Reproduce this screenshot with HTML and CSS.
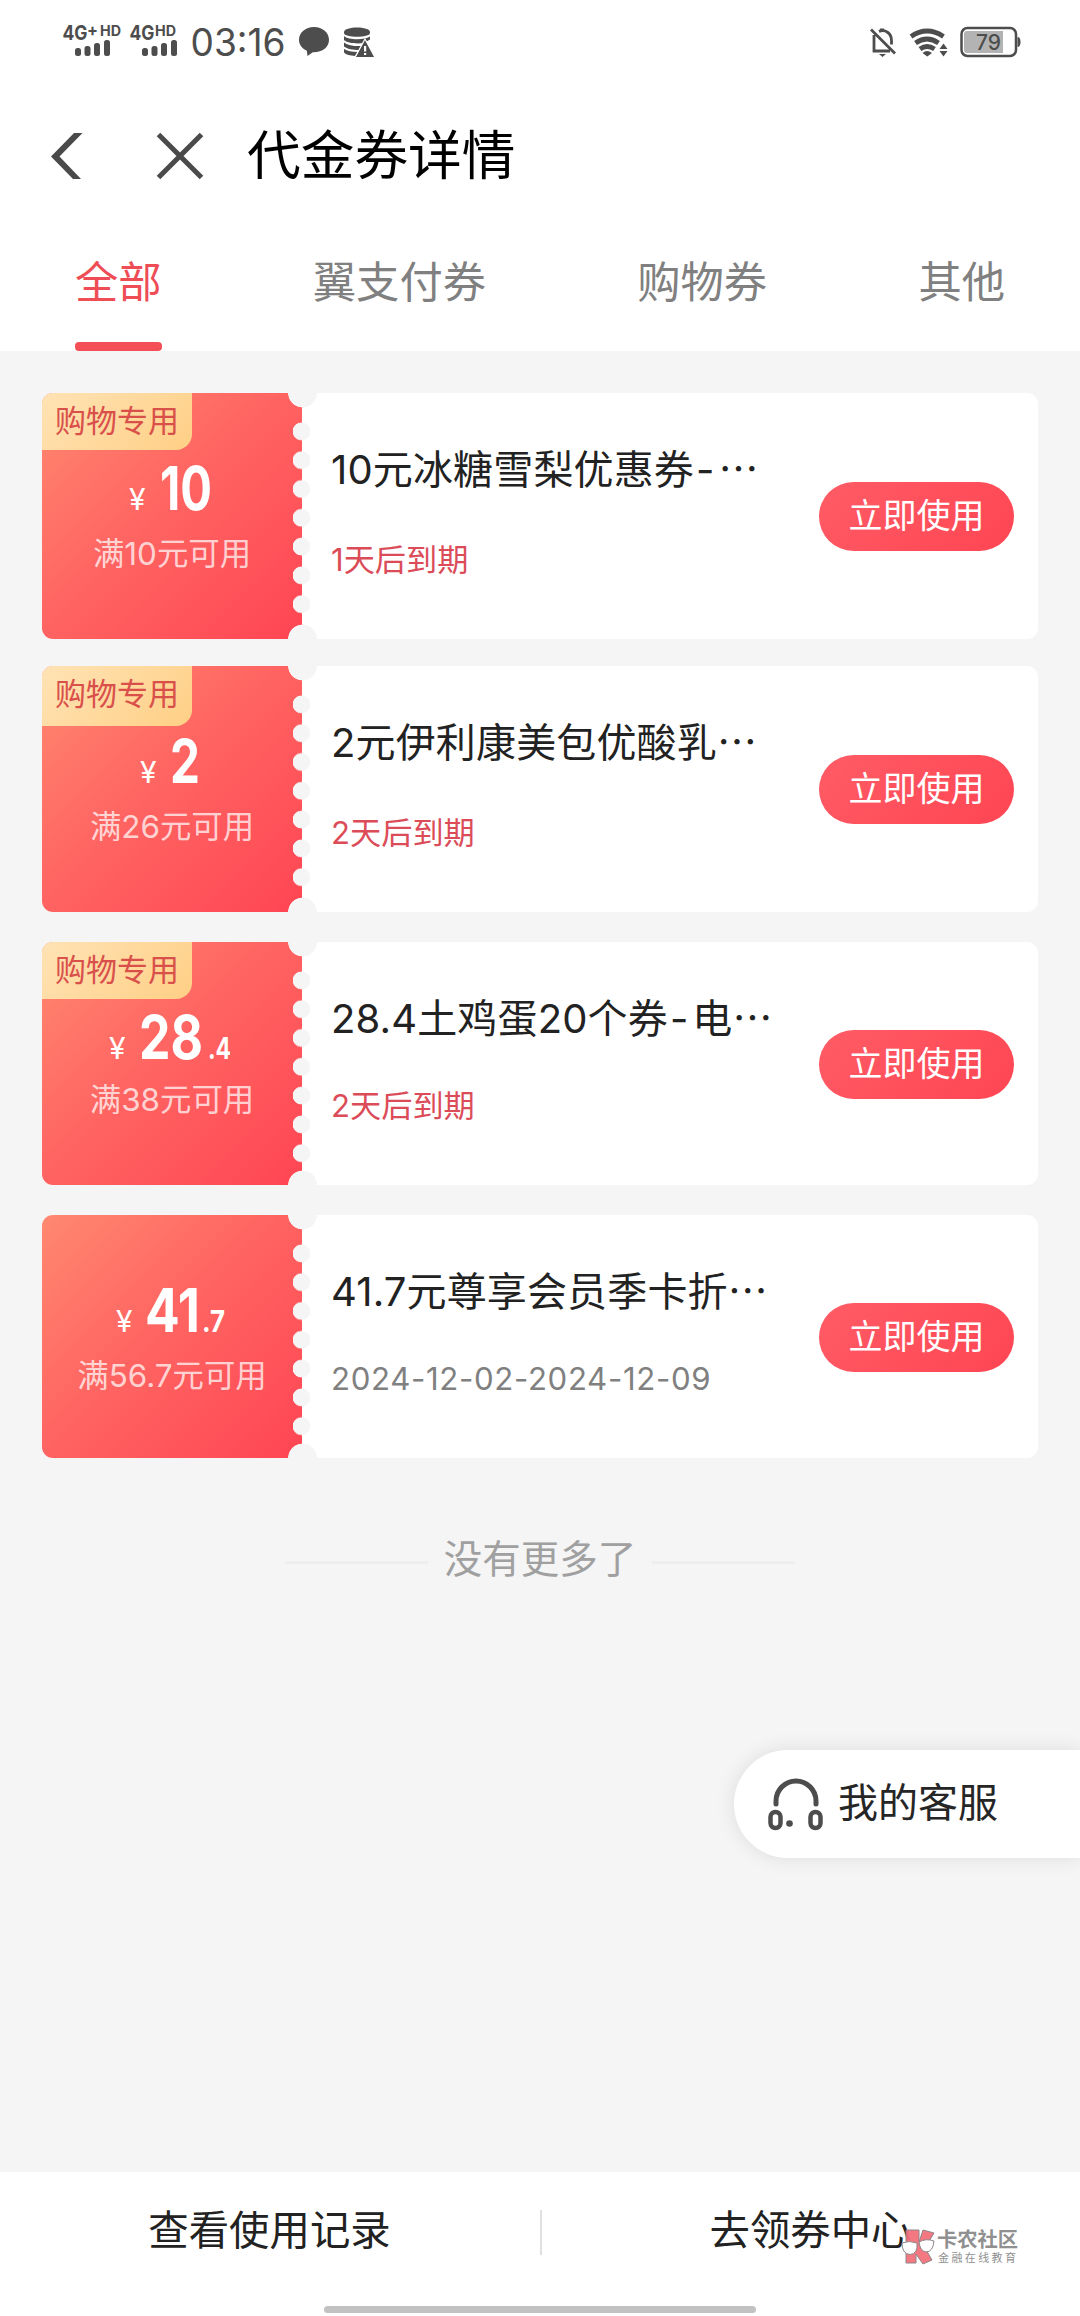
FILE: index.html
```html
<!DOCTYPE html>
<html lang="zh-CN">
<head>
<meta charset="utf-8">
<title>代金券详情</title>
<link rel="stylesheet" href="styles.css">
</head>
<body>
<div class="screen">
  <header class="status">
    <svg class="signals" width="117" height="40" viewBox="62 20 117 40">
      <g class="net">
        <text x="62.5" y="40" font-size="20" textLength="25" lengthAdjust="spacingAndGlyphs">4G</text>
        <text x="87" y="36" font-size="17" textLength="11" lengthAdjust="spacingAndGlyphs">+</text>
        <text x="100" y="35.5" font-size="14" textLength="21" lengthAdjust="spacingAndGlyphs">HD</text>
        <text x="129.500" y="40" font-size="20" textLength="25" lengthAdjust="spacingAndGlyphs">4G</text>
        <text x="155" y="35.500" font-size="14" textLength="21" lengthAdjust="spacingAndGlyphs">HD</text>
      </g>
      <g fill="#4d4d4d">
        <rect x="75" y="48" width="6" height="8" rx="2.500"/><rect x="84.500" y="46" width="6" height="10" rx="2.500"/><rect x="94" y="43" width="6" height="13" rx="2.500"/><rect x="104" y="40" width="6" height="16" rx="2.500"/>
        <rect x="142" y="48" width="6" height="8" rx="2.500"/><rect x="151.500" y="46" width="6" height="10" rx="2.500"/><rect x="161" y="43" width="6" height="13" rx="2.500"/><rect x="171" y="40" width="6" height="16" rx="2.500"/>
      </g>
    </svg>
    <svg class="clock" width="98" height="50" viewBox="190 15 98 50"><text x="190.500" y="56" font-size="38" textLength="95" lengthAdjust="spacingAndGlyphs">03:16</text></svg>
    <svg width="30" height="30" viewBox="0 0 30 30" fill="#4d4d4d"><path d="M15 0C6.500 0 0 5.500 0 12.800c0 4.700 2.900 8.800 7.800 11L8.500 29l5.300-3.700c9.500.3 16.200-5 16.200-12.500C30 5.500 23.500 0 15 0z"/></svg>
    <svg class="db" width="30" height="30" viewBox="0 0 30 30" fill="#4d4d4d">
      <path d="M0 5C0-1 26-1 26 5v1C26 11 0 11 0 6z"/>
      <path d="M0 9c4 4 20 4.500 26 .5v3l-6 3.500C12 17 3 16 0 13z"/>
      <path d="M0 15.500c4 3 11 4 18 3.500l-3 4C9 23 3 22 0 19.500z"/>
      <path d="M0 22c3 2 8 3 13.500 3L11 29C6 28.500 2 28 0 25.500z"/>
      <path d="M21 12l10 18.500h-20z" stroke="#fff" stroke-width="1.200"/>
      <path d="M20 19h2.200v5.500H20zM20 26h2.200v2H20z" fill="#fff"/>
    </svg>
    <span class="spacer"></span>
    <svg width="27" height="30" viewBox="870 27 27 30" fill="none" stroke="#4d4d4d" stroke-width="2.800">
      <path d="M875 35v16h16M880 31.500c6-2.500 12.500 1.500 12.500 9v4M872 29.500L896 53.500"/>
      <path d="M880.500 31l.5-2.500h4l.5 2.500zM880 54h7l-3.500 3z" fill="#4d4d4d" stroke="none"/>
    </svg>
    <svg class="wifi" width="39" height="30" viewBox="910 27 39 30">
      <g fill="none" stroke="#4d4d4d" stroke-width="4.800"><path d="M912 36.500q16-11 32.500 0M916.500 43q11.500-8 23 0M921 49q7-5 14.500 0"/></g>
      <path d="M923.500 53q4.500-4 9.500 0l-4.700 3.500zM940.500 49h8l-4-5.500zM940.500 51h8l-4 5.500z" fill="#4d4d4d"/>
    </svg>
    <svg class="battery" width="62" height="32" viewBox="959 26 62 32">
      <rect x="961.500" y="28" width="54.500" height="28" rx="6" fill="#fff" stroke="#4d4d4d" stroke-width="2.500"/>
      <path d="M967 31h36v22h-36q-3 0-3-3v-16q0-3 3-3z" fill="#b3b3b3"/>
      <path d="M1017.500 37q3 0 3 5t-3 5z" fill="#4d4d4d"/>
      <text x="976" y="50" font-size="21" textLength="25" lengthAdjust="spacingAndGlyphs">79</text>
    </svg>
  </header>

  <nav class="titlebar">
    <svg width="33" height="48" viewBox="0 0 33 48" fill="#4a4a4a"><path d="M23 1h8.500L8.500 24.500 30 47h-8L0 24.500z"/></svg>
    <svg class="close" width="48" height="48" viewBox="0 0 48 48" fill="none" stroke="#4a4a4a" stroke-width="5"><path d="M2.500 2.500l43 43M45.500 2.500l-43 43"/></svg>
    <h1 class="title">代金券详情</h1>
  </nav>

  <div class="tabs">
    <span class="tab active">全部</span><span class="tab">翼支付券</span><span class="tab">购物券</span><span class="tab">其他</span>
  </div>

  <main class="list">
    <article class="coupon">
      <div class="value">
        <span class="tag">购物专用</span>
        <svg class="amount" width="260" height="84"><text class="yen" x="87" y="61">¥</text><text class="big" x="118" y="61" textLength="52" lengthAdjust="spacingAndGlyphs">10</text></svg>
        <p class="limit">满10元可用</p>
      </div>
      <div class="info"><div class="desc"><h2 class="name">10元冰糖雪梨优惠券<span class="dash">-</span><span class="dots">⋯</span></h2><p class="expiry">1天后到期</p></div><span class="use">立即使用</span></div>
    </article>
    <article class="coupon second">
      <div class="value">
        <span class="tag tall">购物专用</span>
        <svg class="amount" width="260" height="84"><text class="yen" x="98" y="61">¥</text><text class="big" x="128" y="61" textLength="30" lengthAdjust="spacingAndGlyphs">2</text></svg>
        <p class="limit">满26元可用</p>
      </div>
      <div class="info"><div class="desc"><h2 class="name">2元伊利康美包优酸乳<span class="dots">⋯</span></h2><p class="expiry">2天后到期</p></div><span class="use">立即使用</span></div>
    </article>
    <article class="coupon short">
      <div class="value">
        <span class="tag">购物专用</span>
        <svg class="amount" width="260" height="84"><text class="yen" x="67" y="61">¥</text><text class="big" x="97" y="61" textLength="64" lengthAdjust="spacingAndGlyphs">28</text><text class="cents" x="166" y="61" textLength="23" lengthAdjust="spacingAndGlyphs">.4</text></svg>
        <p class="limit raised">满38元可用</p>
      </div>
      <div class="info"><div class="desc"><h2 class="name">28.4土鸡蛋20个券<span class="dash">-</span>电<span class="dots">⋯</span></h2><p class="expiry">2天后到期</p></div><span class="use">立即使用</span></div>
    </article>
    <article class="coupon short">
      <div class="value">
        <svg class="amount" width="260" height="84"><text class="yen" x="74" y="61">¥</text><text class="big" x="103" y="61" textLength="55" lengthAdjust="spacingAndGlyphs">41</text><text class="cents" x="160" y="61" textLength="23" lengthAdjust="spacingAndGlyphs">.7</text></svg>
        <p class="limit">满56.7元可用</p>
      </div>
      <div class="info"><div class="desc"><h2 class="name">41.7元尊享会员季卡折<span class="dots">⋯</span></h2><p class="expiry date">2024-12-02-2024-12-09</p></div><span class="use">立即使用</span></div>
    </article>
    <p class="end">没有更多了</p>
  </main>

  <a class="service">
    <svg width="56" height="54" viewBox="0 0 56 54" fill="none" stroke="#4d4d4d">
      <path d="M8 27V24a20 20 0 0 1 40 0v3" stroke-width="5" stroke-linecap="round"/>
      <rect x="2.500" y="35" width="10" height="16" rx="5" stroke-width="4.500"/><rect x="42.500" y="35" width="10" height="16" rx="5" stroke-width="4.500"/>
      <circle cx="21.500" cy="46.500" r="3.300" fill="#4d4d4d" stroke="none"/>
    </svg>
    <span>我的客服</span>
  </a>

  <footer class="bottom">
    <a class="link">查看使用记录</a><span class="rule"></span><a class="link">去领券中心</a>
    <div class="home"></div>
    <div class="mark">
      <svg width="34" height="36" viewBox="0 0 34 36" stroke="#8a8083" stroke-width="1">
        <path d="M5 1h13v12l4-12 11 3-9 15 7 12-9 4-7-10v9H5z" fill="#f4717c"/>
        <path d="M1 14q7-3 15 0 1 11-7 11.500Q1 25 1 14zM18 13q7-4 15-1-1 11-8 11-6-1-7-10z" fill="#fff"/>
      </svg>
      <div class="marktext"><b>卡农社区</b><small>金融在线教育</small></div>
    </div>
  </footer>
</div>
</body>
</html>
```
FILE: styles.css
```css
* { box-sizing: border-box; }
body { margin: 0; background: #f5f5f5; font-family: Inter, "Noto Sans CJK SC", sans-serif; }
h1, h2, p { margin: 0; font-weight: 400; }
svg { display: block; flex: none; overflow: visible; }
.screen { position: relative; width: 1080px; height: 2316px; display: flex; flex-direction: column; overflow: hidden; }

.status { height: 84px; padding: 0 59px 0 62px; background: #fff; display: flex; align-items: center; }
.status text { fill: #4d4d4d; }
.net { font-weight: 700; }
.signals { margin-top: -4px; }
.clock { margin: -4px 11px 0; font-weight: 400; }
.db { margin-left: 15px; }
.spacer { flex: 1; }
.wifi { margin: 0 11px 0 13px; }
.battery { font-weight: 500; }

.titlebar { height: 144px; padding: 0 51px; background: #fff; display: flex; align-items: center; }
.close { margin: 0 43px 0 72px; }
.title { font-size: 53.700px; line-height: 80px; color: #000; }

.tabs { height: 123px; padding: 0 75px; background: #fff; display: flex; justify-content: space-between; }
.tab { position: relative; font-size: 43.300px; line-height: 109px; color: #808080; }
.active { color: #ef4d56; }
.active::after { content: ""; position: absolute; left: 0; right: 0; bottom: 0; height: 9px; border-radius: 4px; background: #f44e57; }

.list { flex: 1; padding: 42px 42px 0; }
.coupon { position: relative; height: 246px; margin-bottom: 27px; display: flex; border-radius: 11px; overflow: hidden; background: #fff; }
.second { margin-bottom: 30px; }
.short { height: 243px; margin-bottom: 30px; }
.coupon::before { content: ""; position: absolute; left: 251px; top: 24px; width: 17px; height: 202px; background: radial-gradient(circle 9px at 8.500px 14.400px, #f5f5f5 8.500px, transparent 9.200px) 0 0 / 17px 28.800px; }
.coupon::after { content: ""; position: absolute; left: 245.500px; top: -14px; width: 29px; bottom: -14px; background: radial-gradient(circle at 14.500px 14px, #f5f5f5 14px, transparent 14.700px), radial-gradient(circle at 14.500px calc(100% - 14px), #f5f5f5 14px, transparent 14.700px); }
.value { width: 260px; padding-top: 56px; background: linear-gradient(135deg, #ff8870 0%, #ff6562 45%, #ff4553 100%); }
.tag { position: absolute; left: 0; top: 0; width: 150px; height: 57px; padding-left: 13px; border-bottom-right-radius: 16px; background: linear-gradient(135deg, #ffe3b5, #ffcf85); color: #d9504b; font-size: 31px; line-height: 55px; }
.tall { height: 60px; }
.amount { fill: #fff; }
.yen { font-size: 30px; font-weight: 400; }
.big { font-size: 61px; font-weight: 700; }
.cents { font-size: 30px; font-weight: 700; }
.limit { margin-top: -1px; text-align: center; font-size: 31.400px; line-height: 44px; color: rgba(255, 255, 255, .74); }
.raised { margin-top: -4px; }
.info { flex: 1; padding: 0 24px 0 29px; display: flex; justify-content: space-between; }
.desc { padding-top: 44px; }
.name { font-size: 40px; line-height: 60px; letter-spacing: .15px; color: #222; white-space: nowrap; }
.dash { letter-spacing: 4px; margin-left: 2px; }
.dots { font-family: "Noto Sans CJK SC", sans-serif; }
.expiry { margin-top: 38px; font-size: 31.200px; line-height: 44px; color: #db4c58; }
.short .expiry { margin-top: 35px; }
.short .date { color: #808080; letter-spacing: .65px; }
.use { align-self: center; width: 195px; height: 69px; margin-top: 1px; border-radius: 35px; background: linear-gradient(135deg, #ff5c66, #ff4553); color: #fff; font-size: 34px; line-height: 67px; text-align: center; }
.end { padding: 43px 243px 0; display: flex; align-items: center; gap: 16px; justify-content: center; font-size: 38.500px; line-height: 56px; color: #a0a0a0; white-space: nowrap; }
.end::before, .end::after { content: ""; flex: 1; height: 3px; margin-top: 6px; background: #eee; }

.service { position: absolute; right: 0; top: 1750px; width: 346px; height: 108px; padding-left: 34px; display: flex; align-items: center; gap: 14px; border-radius: 54px 0 0 54px; background: #fff; box-shadow: 0 0 20px rgba(0, 0, 0, .1); font-size: 40px; color: #262626; }
.service span { line-height: 60px; margin-top: -3px; }

.bottom { position: relative; height: 144px; padding-bottom: 26px; background: #fff; display: flex; align-items: center; }
.link { flex: 1; text-align: center; font-size: 40.400px; line-height: 60px; color: #222; }
.rule { width: 2px; height: 45px; margin: 3px -1px 0 1px; background: #e0e0e0; }
.home { position: absolute; left: 324px; bottom: 3px; width: 432px; height: 7px; border-radius: 4px; background: #c2c2c2; }
.mark { position: absolute; left: 901px; top: 57px; display: flex; gap: 2px; color: #8b8b8b; opacity: .95; }
.marktext { display: flex; flex-direction: column; }
.marktext b { font-size: 20.300px; line-height: 22px; font-weight: 700; }
.marktext small { margin-left: 1px; font-size: 11px; line-height: 14px; letter-spacing: 2.400px; white-space: nowrap; }
```
